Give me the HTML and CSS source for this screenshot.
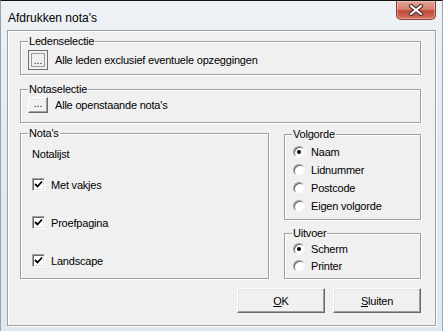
FILE: index.html
```html
<!DOCTYPE html>
<html>
<head>
<meta charset="utf-8">
<link rel="stylesheet" href="styles.css">
</head>
<body>
<div class="window">
  <div class="titlebar">
    <span class="title">Afdrukken nota's</span>
    <div class="close">
      <svg width="16" height="12" viewBox="0 0 16 12">
        <path d="M3 2 L13 10 M13 2 L3 10" stroke="#4a2a28" stroke-width="4.2" stroke-linecap="round"/>
        <path d="M3 2 L13 10 M13 2 L3 10" stroke="#fff" stroke-width="2.2" stroke-linecap="round"/>
      </svg>
    </div>
  </div>
  <div class="client">
    <fieldset class="group g-leden">
      <legend>Ledenselectie</legend>
      <div class="selrow">
        <span class="dotbtn pressed">...</span>
        <span class="seltext">Alle leden exclusief eventuele opzeggingen</span>
      </div>
    </fieldset>
    <fieldset class="group g-notasel">
      <legend>Notaselectie</legend>
      <div class="selrow">
        <span class="dotbtn raised">...</span>
        <span class="seltext">Alle openstaande nota's</span>
      </div>
    </fieldset>
    <div class="columns">
      <fieldset class="group g-notas">
        <legend>Nota's</legend>
        <div class="inner">
          <div class="notalijst">Notalijst</div>
          <div class="checks">
            <label class="check"><span class="box"><svg width="9" height="9" viewBox="0 0 9 9"><path d="M1 4 L3.5 6.5 L8 1.5" stroke="#000" stroke-width="1.8" fill="none"/></svg></span>Met vakjes</label>
            <label class="check"><span class="box"><svg width="9" height="9" viewBox="0 0 9 9"><path d="M1 4 L3.5 6.5 L8 1.5" stroke="#000" stroke-width="1.8" fill="none"/></svg></span>Proefpagina</label>
            <label class="check"><span class="box"><svg width="9" height="9" viewBox="0 0 9 9"><path d="M1 4 L3.5 6.5 L8 1.5" stroke="#000" stroke-width="1.8" fill="none"/></svg></span>Landscape</label>
          </div>
        </div>
      </fieldset>
      <div class="rightcol">
        <fieldset class="group g-volg">
          <legend>Volgorde</legend>
          <div class="radios">
            <label class="radio"><span class="circ on"></span>Naam</label>
            <label class="radio"><span class="circ"></span>Lidnummer</label>
            <label class="radio"><span class="circ"></span>Postcode</label>
            <label class="radio"><span class="circ"></span>Eigen volgorde</label>
          </div>
        </fieldset>
        <fieldset class="group g-uit">
          <legend>Uitvoer</legend>
          <div class="radios tight">
            <label class="radio"><span class="circ on"></span>Scherm</label>
            <label class="radio"><span class="circ"></span>Printer</label>
          </div>
        </fieldset>
      </div>
    </div>
    <div class="buttons">
      <span class="btn"><u>O</u>K</span>
      <span class="btn"><u>S</u>luiten</span>
    </div>
  </div>
</div>
</body>
</html>
```

FILE: styles.css
```css
html, body {
  margin: 0;
  padding: 0;
  width: 443px;
  height: 331px;
  overflow: hidden;
  background: #dfe7f0;
}

.window {
  box-sizing: border-box;
  width: 443px;
  height: 331px;
  border-top: 1px solid #111;
  border-left: 1px solid #9aa3ad;
  border-right: 1px solid #9aa3ad;
  background: linear-gradient(to bottom, #eef2f6 0%, #e4ebf2 40%, #dfe7ef 100%);
  display: flex;
  flex-direction: column;
  font-family: "Liberation Sans", Arial, sans-serif;
  font-size: 11px;
  color: #000;
}

.titlebar {
  height: 29px;
  display: flex;
  align-items: flex-start;
}

.title {
  font-size: 12px;
  line-height: 14px;
  padding-top: 10px;
  padding-left: 7px;
  color: #000;
}

.close {
  margin-left: auto;
  margin-right: 6px;
  width: 40px;
  height: 19px;
  box-sizing: border-box;
  border: 1px solid #8e3b33;
  border-top: none;
  border-radius: 0 0 5px 5px;
  background: linear-gradient(to bottom, #e4a395 0%, #d7826f 45%, #c24a38 55%, #d2735e 100%);
  box-shadow: inset 0 0 0 1px rgba(255,255,255,0.35);
  display: flex;
  align-items: center;
  justify-content: center;
}

.client {
  box-sizing: border-box;
  margin-left: 6px;
  width: 429px;
  height: 296px;
  background: #f0f0f0;
  border: 1px solid #a0a0a0;
  box-shadow: inset 1px 1px 0 #fff, 1px 1px 0 #fff;
  padding: 4px 14px 0 12px;
  display: flex;
  flex-direction: column;
}

.group {
  box-sizing: border-box;
  margin: 0;
  padding: 0;
  min-width: 0;
  border: 1px solid #a0a0a0;
  box-shadow: inset 1px 1px 0 #fff, 1px 1px 0 #fff;
}

.group legend {
  margin-left: 7px;
  padding: 0 1px;
  line-height: 13px;
  background: #f0f0f0;
  letter-spacing: -0.2px;
}

.g-leden { height: 40px; }
.g-notasel { height: 40px; margin-top: 8px; }

.selrow {
  display: flex;
  align-items: center;
  padding-left: 7px;
  gap: 7px;
  letter-spacing: -0.2px;
}

.g-leden .selrow { margin-top: 2px; }
.g-notasel .selrow { margin-top: 1px; }

.dotbtn {
  box-sizing: border-box;
  width: 20px;
  display: flex;
  justify-content: center;
  align-items: flex-end;
  font-size: 10px;
  line-height: 10px;
  letter-spacing: 0;
  color: #000;
  background: #f0f0f0;
}

.dotbtn.pressed {
  height: 20px;
  border: 1px solid #6f6f6f;
  box-shadow: inset 0 0 0 2px #f0f0f0, inset 0 0 0 3px #9a9a9a;
  padding-bottom: 3px;
}

.dotbtn.raised {
  height: 16px;
  border: 1px solid;
  border-color: #fff #696969 #696969 #fff;
  box-shadow: inset -1px -1px 0 #a0a0a0;
  padding-bottom: 3px;
}

.columns {
  display: flex;
  gap: 15px;
  margin-top: 4px;
}

.g-notas {
  width: 249px;
  height: 152px;
}

.inner {
  padding-left: 11px;
}

.notalijst {
  margin-top: 8px;
  line-height: 13px;
  letter-spacing: -0.2px;
}

.checks {
  display: flex;
  flex-direction: column;
  gap: 25px;
  margin-top: 17px;
}

.check {
  display: flex;
  align-items: center;
  height: 13px;
  gap: 6px;
  letter-spacing: -0.2px;
}

.box {
  box-sizing: border-box;
  width: 13px;
  height: 13px;
  background: #fff;
  border: 1px solid;
  border-color: #a0a0a0 #fff #fff #a0a0a0;
  box-shadow: inset 1px 1px 0 #696969, inset -1px -1px 0 #e3e3e3;
  display: flex;
  align-items: center;
  justify-content: center;
}

.rightcol {
  width: 137px;
  display: flex;
  flex-direction: column;
  gap: 7px;
  margin-top: 1px;
}

.g-volg { height: 92px; }
.g-uit { height: 52px; }

.radios {
  display: flex;
  flex-direction: column;
  margin-top: 2px;
  padding-left: 8px;
}

.radios.tight { margin-top: 0; }

.radio {
  display: flex;
  align-items: center;
  height: 18px;
  gap: 6px;
  letter-spacing: -0.2px;
}

.radios.tight .radio { height: 17px; }

.circ {
  box-sizing: border-box;
  width: 12px;
  height: 12px;
  border-radius: 50%;
  background: #fff;
  border: 1px solid;
  border-color: #9a9a9a #f4f4f4 #f4f4f4 #9a9a9a;
  box-shadow: inset 1px 1px 0 #6a6a6a;
  display: flex;
  align-items: center;
  justify-content: center;
}

.circ.on::after {
  content: "";
  width: 4px;
  height: 4px;
  border-radius: 50%;
  background: #000;
}

.buttons {
  display: flex;
  justify-content: flex-end;
  gap: 8px;
  margin-top: 9px;
}

.btn {
  box-sizing: border-box;
  width: 88px;
  height: 25px;
  border: 1px solid;
  border-color: #fff #696969 #696969 #fff;
  box-shadow: inset -1px -1px 0 #a0a0a0, inset 1px 1px 0 #e3e3e3;
  background: #f0f0f0;
  display: flex;
  align-items: center;
  justify-content: center;
  letter-spacing: -0.2px;
}

.btn u {
  text-decoration-thickness: 1px;
  text-underline-offset: 1px;
}
```
